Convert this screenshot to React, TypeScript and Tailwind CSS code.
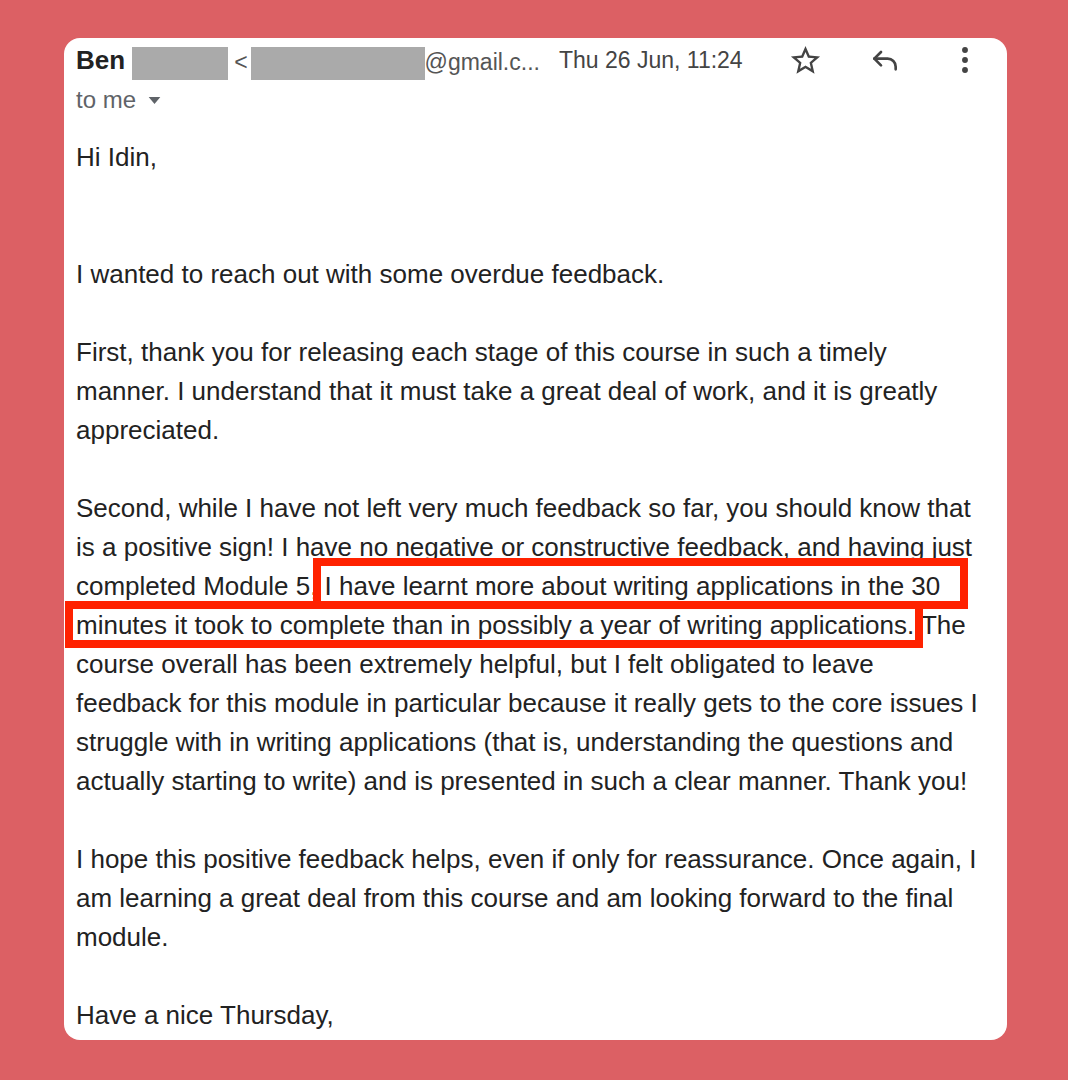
import React from 'react';

function StarIcon() {
  return (
    <svg viewBox="0 0 24 24" className="w-[35px] h-[35px] fill-[#444]">
      <path d="M22 9.24l-7.19-.62L12 2 9.19 8.63 2 9.24l5.46 4.73L5.82 21 12 17.27 18.18 21l-1.63-7.03L22 9.24zM12 15.4l-3.76 2.27 1-4.28-3.32-2.88 4.38-.38L12 6.1l1.71 4.04 4.38.38-3.32 2.88 1 4.28L12 15.4z" />
    </svg>
  );
}

function ReplyIcon() {
  return (
    <svg viewBox="0 0 24 24" className="w-[32px] h-[32px]" fill="none" stroke="#444" strokeWidth={2} strokeLinecap="round" strokeLinejoin="round">
      <path d="M9 6 4 11l5 5" />
      <path d="M4 11h10a6 6 0 0 1 6 6v2" />
    </svg>
  );
}

function DotsIcon() {
  return (
    <svg viewBox="0 0 24 24" className="w-[32px] h-[32px] fill-[#444]">
      <circle cx="12" cy="4.5" r="2.2" />
      <circle cx="12" cy="12" r="2.2" />
      <circle cx="12" cy="19.5" r="2.2" />
    </svg>
  );
}

export default function App() {
  return (
    <main className="w-[1068px] h-[1080px] bg-[#dc6064] pt-[38px] pl-[64px] font-['Liberation_Sans',Arial,sans-serif]">
      <div className="relative w-[943px] h-[1002px] bg-white rounded-[16px] overflow-hidden">
        {/* Header */}
        <div className="flex items-center h-[44px] pl-[12px]">
          <span className="text-[26px] font-bold text-[#222]">Ben</span>
          <span className="ml-[7px] mt-[6px] w-[96px] h-[33px] bg-[#aaaaaa]" />
          <span className="ml-[6px] mt-[4px] text-[23px] text-[#555]">&lt;</span>
          <span className="ml-[3px] mt-[6px] w-[174px] h-[33px] bg-[#aaaaaa]" />
          <span className="mt-[4px] text-[23px] text-[#555]">@gmail.c...</span>
          <span className="ml-[19px] text-[23px] text-[#444]">Thu 26 Jun, 11:24</span>
          <div className="ml-auto mr-[2px] flex items-center">
            <div className="w-[80px] flex justify-center">
              <StarIcon />
            </div>
            <div className="w-[80px] flex justify-center">
              <ReplyIcon />
            </div>
            <div className="w-[80px] flex justify-center">
              <DotsIcon />
            </div>
          </div>
        </div>
        <div className="flex items-center h-[36px] pl-[12px] text-[24px] text-[#5f6368]">
          <span>to me</span>
          <svg viewBox="0 0 10 6" className="ml-[12px] w-[13px] h-[7px] fill-[#5f6368]">
            <polygon points="0,0 10,0 5,6" />
          </svg>
        </div>

        {/* Body */}
        <div className="mt-[20px] pl-[12px] text-[26px] leading-[39px] text-[#222]">
          <p className="mb-[78px]">Hi Idin,</p>
          <p className="mb-[39px]">I wanted to reach out with some overdue feedback.</p>
          <p className="mb-[39px]">
            First, thank you for releasing each stage of this course in such a timely
            <br />
            manner. I understand that it must take a great deal of work, and it is greatly
            <br />
            appreciated.
          </p>
          <p className="mb-[39px]">
            Second, while I have not left very much feedback so far, you should know that
            <br />
            is a positive sign! I have no negative or constructive feedback, and having just
            <br />
            completed Module 5, I have learnt more about writing applications in the 30
            <br />
            minutes it took to complete than in possibly a year of writing applications. The
            <br />
            course overall has been extremely helpful, but I felt obligated to leave
            <br />
            feedback for this module in particular because it really gets to the core issues I
            <br />
            struggle with in writing applications (that is, understanding the questions and
            <br />
            actually starting to write) and is presented in such a clear manner. Thank you!
          </p>
          <p className="mb-[39px]">
            I hope this positive feedback helps, even if only for reassurance. Once again, I
            <br />
            am learning a great deal from this course and am looking forward to the final
            <br />
            module.
          </p>
          <p>Have a nice Thursday,</p>
        </div>

        {/* Highlight annotation */}
        <div className="absolute left-[249px] top-[520px] w-[655px] h-[51px] border-[8px] border-[#ff2200]" />
        <div className="absolute left-[1px] top-[563px] w-[858px] h-[47px] border-[8px] border-[#ff2200]" />
      </div>
    </main>
  );
}
